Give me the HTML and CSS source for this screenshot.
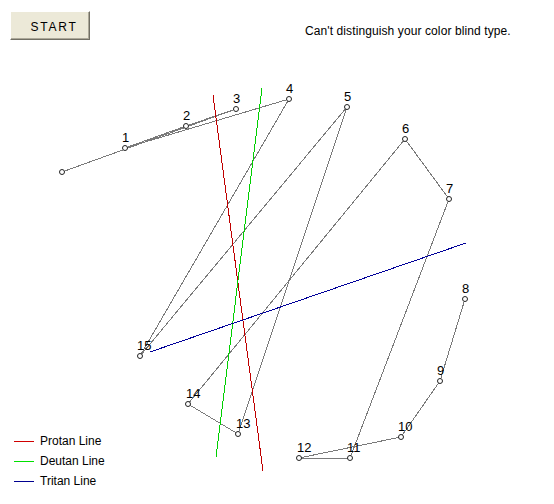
FILE: index.html
```html
<!DOCTYPE html>
<html lang="en">
<head>
<meta charset="utf-8">
<title>Color Blind Test</title>
<link rel="stylesheet" href="styles.css">
</head>
<body>
<div class="app">
  <header class="toolbar">
    <button class="start" type="button">START</button>
    <p class="status">Can't distinguish your color blind type.</p>
  </header>

  <svg class="plot" width="554" height="504" viewBox="0 0 554 504" xmlns="http://www.w3.org/2000/svg">
    <polyline class="path" points="62,172 236,109 186,126 125,148 289,99 140,356 347,107 238,434 188,404 405,139 449,199 350,458 299,458 401,437 440,381 465,299"/>
    <line class="protan" x1="213" y1="95" x2="263" y2="471"/>
    <line class="deutan" x1="262" y1="88" x2="216" y2="457"/>
    <line class="tritan" x1="150" y1="352" x2="466" y2="243"/>
    <g class="caps">
      <circle cx="62" cy="172" r="2.5"/>
      <circle cx="125" cy="148" r="2.5"/>
      <circle cx="186" cy="126" r="2.5"/>
      <circle cx="236" cy="109" r="2.5"/>
      <circle cx="289" cy="99" r="2.5"/>
      <circle cx="347" cy="107" r="2.5"/>
      <circle cx="405" cy="139" r="2.5"/>
      <circle cx="449" cy="199" r="2.5"/>
      <circle cx="465" cy="299" r="2.5"/>
      <circle cx="440" cy="381" r="2.5"/>
      <circle cx="401" cy="437" r="2.5"/>
      <circle cx="350" cy="458" r="2.5"/>
      <circle cx="299" cy="458" r="2.5"/>
      <circle cx="238" cy="434" r="2.5"/>
      <circle cx="188" cy="404" r="2.5"/>
      <circle cx="140" cy="356" r="2.5"/>
    </g>
    <g class="labels">
      <text x="122" y="142">1</text>
      <text x="183" y="120">2</text>
      <text x="233" y="103">3</text>
      <text x="286" y="93">4</text>
      <text x="344" y="101">5</text>
      <text x="402" y="133">6</text>
      <text x="446" y="193">7</text>
      <text x="462" y="293">8</text>
      <text x="437" y="375">9</text>
      <text x="398" y="431">10</text>
      <text x="347" y="452">11</text>
      <text x="297" y="452">12</text>
      <text x="236" y="428">13</text>
      <text x="186" y="398">14</text>
      <text x="137" y="350">15</text>
    </g>
  </svg>

  <ul class="legend">
    <li class="legend-item"><span class="swatch swatch-protan"></span>Protan Line</li>
    <li class="legend-item"><span class="swatch swatch-deutan"></span>Deutan Line</li>
    <li class="legend-item"><span class="swatch swatch-tritan"></span>Tritan Line</li>
  </ul>
</div>
</body>
</html>
```

FILE: styles.css
```css
html, body {
  margin: 0;
  padding: 0;
  background: #ffffff;
}

body {
  font-family: "Liberation Sans", Arial, sans-serif;
  color: #000000;
}

.app {
  display: grid;
  width: 554px;
  height: 504px;
  overflow: hidden;
}

.app > * {
  grid-area: 1 / 1;
}

.toolbar {
  align-self: start;
  display: flex;
  align-items: flex-start;
  padding: 11px 0 0 10px;
  position: relative;
  z-index: 1;
}

.start {
  width: 80px;
  height: 29px;
  margin: 0;
  padding: 2px 0 0 8px;
  background: #ece9d8;
  border: 1px solid;
  border-color: #ffffff #716f64 #716f64 #ffffff;
  box-shadow: inset -1px -1px 0 #aca899;
  font-family: "Liberation Sans", Arial, sans-serif;
  font-size: 12px;
  letter-spacing: 1.8px;
  color: #000000;
}

.status {
  margin: 14px 0 0 215px;
  font-size: 12px;
  line-height: 13px;
  letter-spacing: 0.1px;
  white-space: nowrap;
}

.plot {
  display: block;
}

.path,
.protan,
.deutan,
.tritan {
  shape-rendering: crispEdges;
}

.path {
  fill: none;
  stroke: #7a7a7a;
  stroke-width: 1;
}

.protan {
  stroke: #c00000;
  stroke-width: 1;
}

.deutan {
  stroke: #00d000;
  stroke-width: 1;
}

.tritan {
  stroke: #000099;
  stroke-width: 1;
}

.caps circle {
  fill: #ffffff;
  stroke: #222222;
  stroke-width: 1;
}

.labels text {
  font-family: "Liberation Sans", Arial, sans-serif;
  font-size: 13px;
  fill: #000000;
}

.legend {
  align-self: end;
  justify-self: start;
  list-style: none;
  margin: 0 0 13px 0;
  padding: 0 0 0 14px;
  position: relative;
  z-index: 1;
}

.legend-item {
  display: flex;
  align-items: flex-start;
  gap: 6px;
  height: 20px;
  font-size: 12px;
  line-height: 20px;
}

.swatch {
  width: 20px;
  height: 0;
  margin-top: 10px;
  border-top: 1px solid;
}

.swatch-protan { border-color: #d00000; }
.swatch-deutan { border-color: #00e000; }
.swatch-tritan { border-color: #000090; }
```
